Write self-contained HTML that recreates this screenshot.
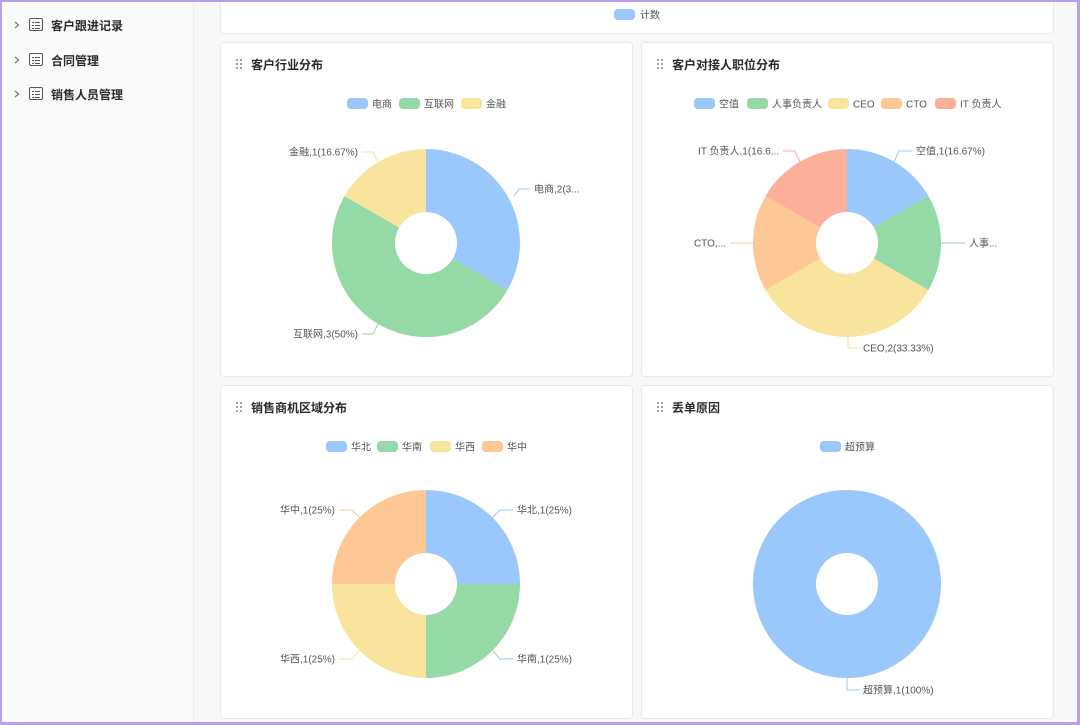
<!DOCTYPE html>
<html><head><meta charset="utf-8">
<style>
*{margin:0;padding:0;box-sizing:border-box}
html,body{width:1080px;height:725px;overflow:hidden}
body{background:#f7f8f8;font-family:"Liberation Sans","Noto Sans CJK SC",sans-serif;position:relative}
.side{position:absolute;left:0;top:0;width:194px;height:725px;background:#f9fafa;border-right:1px solid #ececec}
.item{position:absolute;left:0;height:20px;display:flex;align-items:center;font-size:12px;color:#2b2b2b;font-weight:600}
.chev{position:absolute;left:12px;top:5px;width:10px;height:10px}
.ico{position:absolute;left:29px;top:3px;width:14px;height:13px;border:1.2px solid #555;border-radius:2px}
.ico i{position:absolute;height:1px;background:#555}
.item span{position:absolute;left:51px;white-space:nowrap;top:2px}
.card{position:absolute;background:#fff;border:1px solid #e7e9ea;border-radius:4px}
.title{position:absolute;left:30px;top:13px;font-size:12px;font-weight:700;color:#2a2a2a}
.drag{position:absolute;left:15px;top:16px;width:7px;height:11px}
.drag b{position:absolute;width:2px;height:2px;background:#888;border-radius:1px}
.frame{position:absolute;left:0;top:0;width:1080px;height:725px;border:2px solid #b89df0;border-right-width:3px;border-bottom-width:3px;pointer-events:none}
svg text{font-family:"Liberation Sans","Noto Sans CJK SC",sans-serif;font-size:10px;fill:#555}
</style></head><body>
<div class="side">
 <div class="item" style="top:15px"><svg class="chev" viewBox="0 0 10 10"><path d="M3 2 L6.5 5 L3 8" fill="none" stroke="#777" stroke-width="1.2"/></svg><div class="ico"><i style="left:2px;top:3px;width:2px"></i><i style="left:5px;top:3px;width:5px"></i><i style="left:2px;top:6px;width:2px"></i><i style="left:5px;top:6px;width:5px"></i><i style="left:2px;top:9px;width:2px"></i><i style="left:5px;top:9px;width:5px"></i></div><span>客户跟进记录</span></div>
 <div class="item" style="top:50px"><svg class="chev" viewBox="0 0 10 10"><path d="M3 2 L6.5 5 L3 8" fill="none" stroke="#777" stroke-width="1.2"/></svg><div class="ico"><i style="left:2px;top:3px;width:2px"></i><i style="left:5px;top:3px;width:5px"></i><i style="left:2px;top:6px;width:2px"></i><i style="left:5px;top:6px;width:5px"></i><i style="left:2px;top:9px;width:2px"></i><i style="left:5px;top:9px;width:5px"></i></div><span>合同管理</span></div>
 <div class="item" style="top:84px"><svg class="chev" viewBox="0 0 10 10"><path d="M3 2 L6.5 5 L3 8" fill="none" stroke="#777" stroke-width="1.2"/></svg><div class="ico"><i style="left:2px;top:3px;width:2px"></i><i style="left:5px;top:3px;width:5px"></i><i style="left:2px;top:6px;width:2px"></i><i style="left:5px;top:6px;width:5px"></i><i style="left:2px;top:9px;width:2px"></i><i style="left:5px;top:9px;width:5px"></i></div><span>销售人员管理</span></div>
</div>

<div class="card" style="left:220px;top:-6px;width:834px;height:40px"></div>
<div class="card" style="left:220px;top:42px;width:413px;height:335px"><div class="drag"><b style="left:0;top:0"></b><b style="left:4px;top:0"></b><b style="left:0;top:4px"></b><b style="left:4px;top:4px"></b><b style="left:0;top:8px"></b><b style="left:4px;top:8px"></b></div><div class="title">客户行业分布</div></div>
<div class="card" style="left:641px;top:42px;width:413px;height:335px"><div class="drag"><b style="left:0;top:0"></b><b style="left:4px;top:0"></b><b style="left:0;top:4px"></b><b style="left:4px;top:4px"></b><b style="left:0;top:8px"></b><b style="left:4px;top:8px"></b></div><div class="title">客户对接人职位分布</div></div>
<div class="card" style="left:220px;top:385px;width:413px;height:334px"><div class="drag"><b style="left:0;top:0"></b><b style="left:4px;top:0"></b><b style="left:0;top:4px"></b><b style="left:4px;top:4px"></b><b style="left:0;top:8px"></b><b style="left:4px;top:8px"></b></div><div class="title">销售商机区域分布</div></div>
<div class="card" style="left:641px;top:385px;width:413px;height:334px"><div class="drag"><b style="left:0;top:0"></b><b style="left:4px;top:0"></b><b style="left:0;top:4px"></b><b style="left:4px;top:4px"></b><b style="left:0;top:8px"></b><b style="left:4px;top:8px"></b></div><div class="title">丢单原因</div></div>

<svg width="1080" height="725" style="position:absolute;left:0;top:0">
 <rect x="614" y="9" width="21" height="11" rx="4" fill="#9ac8fc"/><text x="640" y="18.5">计数</text>

 <rect x="347" y="98" width="21" height="11" rx="4" fill="#9ac8fc"/><text x="372" y="107.5">电商</text>
 <rect x="399" y="98" width="21" height="11" rx="4" fill="#95d9a6"/><text x="424" y="107.5">互联网</text>
 <rect x="461" y="98" width="21" height="11" rx="4" fill="#f8e49c"/><text x="486" y="107.5">金融</text>
 <path d="M426 243 L426 149 A94 94 0 0 1 507.41 290 Z" fill="#9ac8fc"/>
 <path d="M426 243 L507.41 290 A94 94 0 1 1 344.59 196 Z" fill="#95d9a6"/>
 <path d="M426 243 L344.59 196 A94 94 0 0 1 426 149 Z" fill="#f8e49c"/>
 <circle cx="426" cy="243" r="31" fill="#fff"/>
 <path d="M514 196 L519 189 L530 189" fill="none" stroke="#9ac8fc"/><text x="534" y="192.5">电商,2(3...</text>
 <path d="M378 162 L373 152 L362 152" fill="none" stroke="#f8e49c"/><text x="358" y="155.5" text-anchor="end">金融,1(16.67%)</text>
 <path d="M378 324 L373 334 L362 334" fill="none" stroke="#95d9a6"/><text x="358" y="337.5" text-anchor="end">互联网,3(50%)</text>

 <rect x="694" y="98" width="21" height="11" rx="4" fill="#9ac8fc"/><text x="719" y="107.5">空值</text>
 <rect x="747" y="98" width="21" height="11" rx="4" fill="#95d9a6"/><text x="772" y="107.5">人事负责人</text>
 <rect x="828" y="98" width="21" height="11" rx="4" fill="#f8e49c"/><text x="853" y="107.5">CEO</text>
 <rect x="881" y="98" width="21" height="11" rx="4" fill="#fdc896"/><text x="906" y="107.5">CTO</text>
 <rect x="935" y="98" width="21" height="11" rx="4" fill="#fcaf99"/><text x="960" y="107.5">IT 负责人</text>
 <path d="M847 243 L847 149 A94 94 0 0 1 928.41 196 Z" fill="#9ac8fc"/>
 <path d="M847 243 L928.41 196 A94 94 0 0 1 928.41 290 Z" fill="#95d9a6"/>
 <path d="M847 243 L928.41 290 A94 94 0 0 1 765.59 290 Z" fill="#f8e49c"/>
 <path d="M847 243 L765.59 290 A94 94 0 0 1 765.59 196 Z" fill="#fdc896"/>
 <path d="M847 243 L765.59 196 A94 94 0 0 1 847 149 Z" fill="#fcaf99"/>
 <circle cx="847" cy="243" r="31" fill="#fff"/>
 <path d="M894 162 L899 151 L912 151" fill="none" stroke="#9ac8fc"/><text x="916" y="154.5">空值,1(16.67%)</text>
 <path d="M800 162 L795 151 L783 151" fill="none" stroke="#fcaf99"/><text x="779" y="154.5" text-anchor="end">IT 负责人,1(16.6...</text>
 <path d="M941 243 L965 243" fill="none" stroke="#95d9a6"/><text x="969" y="246.5">人事...</text>
 <path d="M753 243 L730 243" fill="none" stroke="#fdc896"/><text x="726" y="246.5" text-anchor="end">CTO,...</text>
 <path d="M848 337 L848 348 L860 348" fill="none" stroke="#f8e49c"/><text x="863" y="351.5">CEO,2(33.33%)</text>

 <rect x="326" y="441" width="21" height="11" rx="4" fill="#9ac8fc"/><text x="351" y="450.5">华北</text>
 <rect x="377" y="441" width="21" height="11" rx="4" fill="#95d9a6"/><text x="402" y="450.5">华南</text>
 <rect x="430" y="441" width="21" height="11" rx="4" fill="#f8e49c"/><text x="455" y="450.5">华西</text>
 <rect x="482" y="441" width="21" height="11" rx="4" fill="#fdc896"/><text x="507" y="450.5">华中</text>
 <path d="M426 584 L426 490 A94 94 0 0 1 520 584 Z" fill="#9ac8fc"/>
 <path d="M426 584 L520 584 A94 94 0 0 1 426 678 Z" fill="#95d9a6"/>
 <path d="M426 584 L426 678 A94 94 0 0 1 332 584 Z" fill="#f8e49c"/>
 <path d="M426 584 L332 584 A94 94 0 0 1 426 490 Z" fill="#fdc896"/>
 <circle cx="426" cy="584" r="31" fill="#fff"/>
 <path d="M492 518 L500 510 L513 510" fill="none" stroke="#9ac8fc"/><text x="517" y="513.5">华北,1(25%)</text>
 <path d="M360 518 L352 510 L339 510" fill="none" stroke="#fdc896"/><text x="335" y="513.5" text-anchor="end">华中,1(25%)</text>
 <path d="M492 650 L500 659 L513 659" fill="none" stroke="#95d9a6"/><text x="517" y="662.5">华南,1(25%)</text>
 <path d="M360 650 L352 659 L339 659" fill="none" stroke="#f8e49c"/><text x="335" y="662.5" text-anchor="end">华西,1(25%)</text>

 <rect x="820" y="441" width="21" height="11" rx="4" fill="#9ac8fc"/><text x="845" y="450.5">超预算</text>
 <circle cx="847" cy="584" r="94" fill="#9ac8fc"/>
 <circle cx="847" cy="584" r="31" fill="#fff"/>
 <path d="M847 678 L847 690 L860 690" fill="none" stroke="#9ac8fc"/><text x="863" y="693.5">超预算,1(100%)</text>
</svg>
<div class="frame"></div>
</body></html>
